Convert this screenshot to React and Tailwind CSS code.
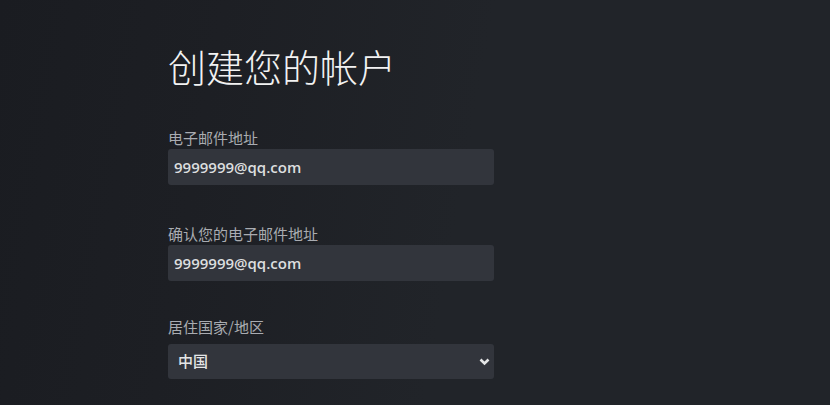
import { useState } from 'react';

const cjk = { fontFamily: '"Noto Sans CJK SC", "Noto Sans", sans-serif' };
const latin = { fontFamily: '"Open Sans", "Noto Sans CJK SC", sans-serif' };

const Field = ({ label, value, onChange, className = '' }) => (
  <div className={className}>
    <label className="block text-[15px] leading-[20px] text-[#a9acb1]" style={cjk}>
      {label}
    </label>
    <input
      value={value}
      onChange={(e) => onChange(e.target.value)}
      className="mt-px block h-[36px] w-[326px] rounded-[3px] bg-[#32353c] px-[6px] text-[15px] font-semibold text-[#dcdedf] outline-none"
      style={latin}
    />
  </div>
);

const App = () => {
  const [email, setEmail] = useState('9999999@qq.com');
  const [confirm, setConfirm] = useState('9999999@qq.com');

  return (
    <div className="h-[405px] w-full overflow-hidden bg-[linear-gradient(100deg,#1a1c21_0%,#1d1f24_25%,#212429_55%,#212429_100%)] pl-[168px] pt-[47px]">
      <h1 className="text-[38px] font-light leading-[38px] text-[#f2f2f2]" style={cjk}>
        创建您的帐户
      </h1>

      <Field label="电子邮件地址" value={email} onChange={setEmail} className="mt-[43px]" />
      <Field label="确认您的电子邮件地址" value={confirm} onChange={setConfirm} className="mt-[39px]" />

      <div className="mt-[36px]">
        <label className="block text-[15px] leading-[20px] text-[#a9acb1]" style={cjk}>
          居住国家/地区
        </label>
        <div className="relative mt-[7px] w-[326px]">
          <select
            className="block h-[35px] w-full appearance-none rounded-[3px] bg-[#32353c] pl-[10px] text-[15px] font-medium text-[#e4e5e6] outline-none"
            style={cjk}
            defaultValue="CN"
          >
            <option value="CN">中国</option>
            <option value="US">美国</option>
          </select>
          <svg
            className="pointer-events-none absolute right-[4px] top-[14px]"
            width="11"
            height="8"
            viewBox="0 0 11 8"
          >
            <polyline points="1.5,1.5 5.5,5.5 9.5,1.5" fill="none" stroke="#e4e5e6" strokeWidth="2.6" />
          </svg>
        </div>
      </div>
    </div>
  );
};

export default App;
